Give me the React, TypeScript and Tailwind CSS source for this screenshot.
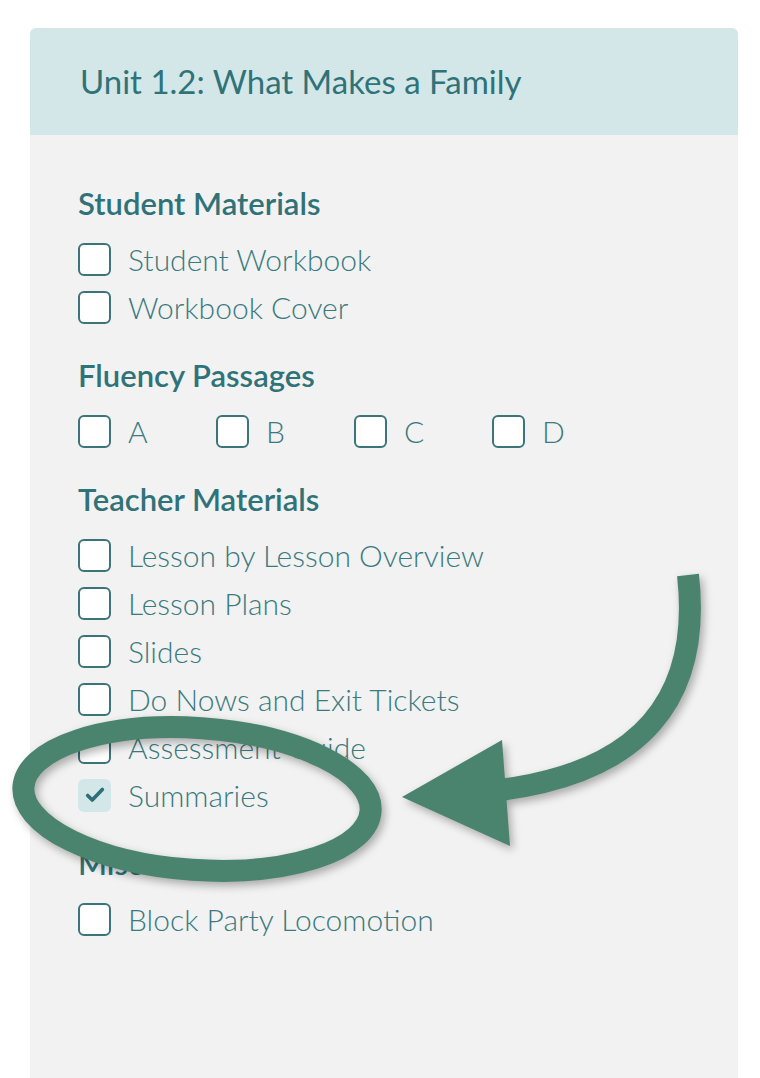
const font = { fontFamily: "Lato, 'Open Sans', sans-serif" };

type Item = { label: string; checked?: boolean };

function Box({ checked }: { checked?: boolean }) {
  if (checked) {
    return (
      <span className="flex h-[33px] w-[33px] shrink-0 items-center justify-center rounded-md bg-[#d4e7e8]">
        <svg width="22" height="22" viewBox="0 0 24 24" fill="none">
          <path d="M4 12.5l5 5L20 6" stroke="#2f6f78" strokeWidth="4" strokeLinecap="round" strokeLinejoin="round" />
        </svg>
      </span>
    );
  }
  return <span className="h-[33px] w-[33px] shrink-0 rounded-md border-2 border-[#3b747a] bg-white" />;
}

function Row({ label, checked }: Item) {
  return (
    <label className="flex h-12 items-center gap-[17px]">
      <Box checked={checked} />
      <span className="text-[30px] font-light text-[#3a7a80]">{label}</span>
    </label>
  );
}

function Heading({ children }: { children: string }) {
  return <h3 className="mt-6 flex h-10 items-center text-[31px] font-semibold text-[#2f7379]">{children}</h3>;
}

const teacher: Item[] = [
  { label: "Lesson by Lesson Overview" },
  { label: "Lesson Plans" },
  { label: "Slides" },
  { label: "Do Nows and Exit Tickets" },
  { label: "Assessment Guide" },
  { label: "Summaries", checked: true },
];

export default function App() {
  return (
    <div className="relative min-h-[1078px] w-[760px] bg-white pt-7" style={font}>
      <div className="mx-[30px] w-[708px] min-h-[1050px] overflow-hidden rounded-t-md bg-[#f2f2f2]">
        <div className="flex h-[107px] items-center bg-[#d4e7e8] px-[50px]">
          <h2 className="text-[33px] font-normal text-[#2f7379]">Unit 1.2: What Makes a Family</h2>
        </div>
        <div className="px-12 pt-6">
          <Heading>Student Materials</Heading>
          <div className="mt-3">
            <Row label="Student Workbook" />
            <Row label="Workbook Cover" />
          </div>
          <Heading>Fluency Passages</Heading>
          <div className="mt-3 flex">
            {["A", "B", "C", "D"].map((l) => (
              <div key={l} className="w-[138px]">
                <Row label={l} />
              </div>
            ))}
          </div>
          <Heading>Teacher Materials</Heading>
          <div className="mt-3">
            {teacher.map((t) => (
              <Row key={t.label} {...t} />
            ))}
          </div>
          <Heading>Misc</Heading>
          <div className="mt-3">
            <Row label="Block Party Locomotion" />
          </div>
        </div>
      </div>

      <svg
        className="pointer-events-none absolute left-0 top-0"
        width="760"
        height="1078"
        viewBox="0 0 760 1078"
        style={{ filter: "drop-shadow(3px 4px 4px rgba(0,0,0,0.3))" }}
      >
        <ellipse cx="197" cy="799" rx="174" ry="71" fill="none" stroke="#4a846f" strokeWidth="22" transform="rotate(4 197 799)" />
        <path d="M688 575 C702 700 640 772 500 790" fill="none" stroke="#4a846f" strokeWidth="22" />
        <path d="M402 797 L502 740 L510 846 Z" fill="#4a846f" />
      </svg>
    </div>
  );
}
